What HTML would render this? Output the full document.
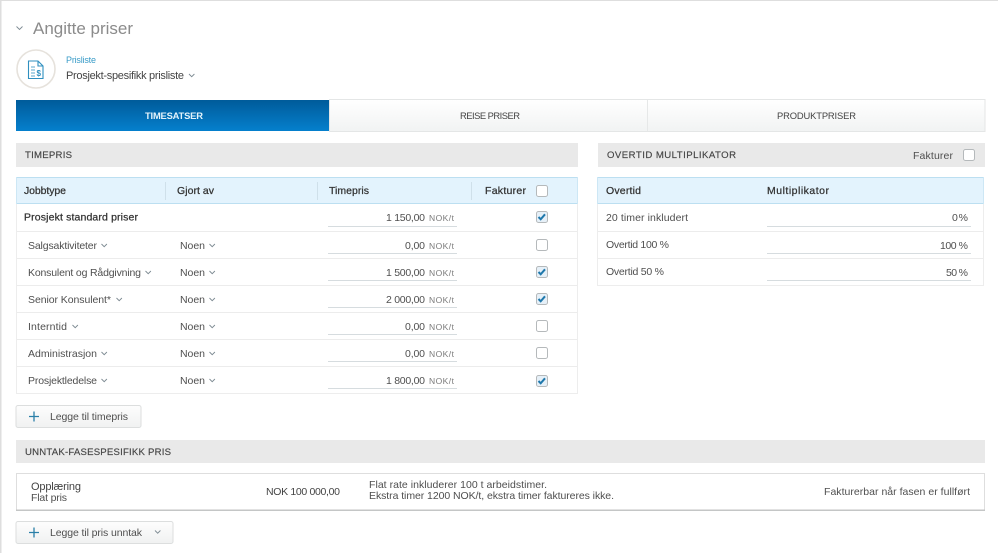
<!DOCTYPE html>
<html lang="no"><head><meta charset="utf-8"><title>Angitte priser</title>
<style>
html,body{margin:0;padding:0;background:#fff;overflow:hidden}
svg{display:block;filter:blur(.3px)}
text{font-family:"Liberation Sans",Arial,sans-serif;font-size:10.5px;fill:#4f4f4f}
.b{stroke:#333;stroke-width:.25;fill:#333}
.h{font-size:9.6px;fill:#444;stroke:#444;stroke-width:.15}
.c{fill:none;stroke:#7d8a92;stroke-width:.9}
.n{font-size:8.5px;fill:#7a7a7a}
.u{stroke:#d6dcdf;stroke-width:1}
.r{stroke:#ececec;stroke-width:1}
.cb{fill:#fff;stroke:#b5b9bb;stroke-width:1}
.cc{fill:#e6f0f8;stroke:#b5b9bb;stroke-width:1}
.ck{fill:none;stroke:#1f78ac;stroke-width:2}
.d{stroke:#cfe0ea;stroke-width:1}
</style></head><body>
<svg width="998" height="553" viewBox="0 0 998 553" xmlns="http://www.w3.org/2000/svg">
<defs>
<linearGradient id="blue" x1="0" y1="0" x2="0" y2="1"><stop offset="0" stop-color="#005b9a"/><stop offset="1" stop-color="#0580cd"/></linearGradient>
<linearGradient id="tab" x1="0" y1="0" x2="0" y2="1"><stop offset="0" stop-color="#fff"/><stop offset="1" stop-color="#f1f3f3"/></linearGradient>
<linearGradient id="btn" x1="0" y1="0" x2="0" y2="1"><stop offset="0" stop-color="#fdfdfd"/><stop offset="1" stop-color="#f0f1f1"/></linearGradient>
</defs>
<rect width="998" height="553" fill="#fff"/>
<rect x="0" y="0" width="998" height="1" fill="#dedede"/>
<rect x="0" y="0" width="1.5" height="553" fill="#dedede"/>

<path d="M16.5 26.500l3 3 3-3" class="c"/>
<text x="33" y="34" style="font-size:17px;fill:#8b8b8b" textLength="100">Angitte priser</text>

<circle cx="36" cy="69" r="19" fill="#fff" stroke="#e6e2dc" stroke-width="1.6"/>
<path d="M28.500 61h9.500l5 5v12.500h-14.500zM38 61v5h5" fill="none" stroke="#2f8fbf" stroke-width="1.100"/>
<path d="M31 67h4M31 70h4M31 73h4M31 76h4" stroke="#5aa7cc" stroke-width="1"/>
<text x="36.500" y="76" style="font-size:8px;fill:#2f8fbf;font-weight:bold">$</text>
<text x="66" y="63" style="font-size:9px;fill:#3a9cc8" textLength="30">Prisliste</text>
<text x="66" y="79" style="font-size:11px;fill:#444" textLength="118">Prosjekt-spesifikk prisliste</text>
<path d="M189 74l2.700 2.700 2.700-2.700" class="c"/>

<rect x="329.500" y="99.500" width="655.500" height="32" fill="url(#tab)" stroke="#e4e6e6"/>
<line x1="647.500" y1="100" x2="647.500" y2="131" stroke="#e6e8e8"/>
<rect x="16" y="100" width="313" height="31" fill="url(#blue)"/>
<text x="145" y="119" style="font-size:9.400px;font-weight:bold;fill:#e4f3fb" textLength="58">TIMESATSER</text>
<text x="460" y="119" style="font-size:9.400px;fill:#444" textLength="60">REISE PRISER</text>
<text x="777" y="119" style="font-size:9.400px;fill:#444" textLength="79">PRODUKTPRISER</text>

<rect x="16" y="143" width="562" height="24" fill="#e9e9e9"/>
<text x="25" y="158" class="h" textLength="47">TIMEPRIS</text>
<rect x="598" y="143" width="387" height="24" fill="#e9e9e9"/>
<text x="607" y="158" class="h" textLength="129">OVERTID MULTIPLIKATOR</text>
<text x="913" y="159" textLength="40">Fakturer</text>
<rect x="963.500" y="149.500" width="11" height="11" rx="2" class="cb"/>

<!-- left table -->
<rect x="16.500" y="177.500" width="561" height="216" fill="#fff" stroke="#ededed"/>
<rect x="16" y="177" width="562" height="27" fill="#e3f3fd"/>
<path d="M16 177.500h562M16 203.500h562" stroke="#bcdff1"/>
<path d="M16.500 177v27M577.500 177v27" stroke="#cde7f5"/>
<path d="M165.500 182v18M317.500 182v18M471.500 182v18" class="d"/>
<text x="24" y="194" class="b" textLength="42">Jobbtype</text>
<text x="177" y="194" class="b" textLength="37">Gjort av</text>
<text x="329" y="194" class="b" textLength="40">Timepris</text>
<text x="485" y="194" class="b" textLength="41">Fakturer</text>
<rect x="536.500" y="185.500" width="11" height="11" rx="2" class="cb"/>

<path d="M17 231.500h560M17 258.500h560M17 285.500h560M17 312.500h560M17 339.500h560M17 366.500h560" class="r"/>

<text x="24" y="220.500" class="b" textLength="114">Prosjekt standard priser</text>
<line x1="328" y1="226.500" x2="457" y2="226.500" class="u"/>
<text x="386" y="221" textLength="39">1 150,00</text><text x="429" y="221" class="n" textLength="25">NOK/t</text>
<rect x="536.500" y="211.500" width="11" height="11" rx="2" class="cc"/><path d="M538.500 217l2.200 2.300 4.300-5" class="ck"/>

<text x="28" y="249" textLength="69">Salgsaktiviteter</text><path d="M101.500 244l2.700 2.700 2.700-2.700" class="c"/>
<text x="180" y="249" textLength="25">Noen</text><path d="M209.500 244l2.700 2.700 2.700-2.700" class="c"/>
<line x1="328" y1="253.500" x2="457" y2="253.500" class="u"/>
<text x="405" y="249" textLength="20">0,00</text><text x="429" y="249" class="n" textLength="25">NOK/t</text>
<rect x="536.500" y="239.500" width="11" height="11" rx="2" class="cb"/>

<text x="28" y="276" textLength="113">Konsulent og Rådgivning</text><path d="M145.500 271l2.700 2.700 2.700-2.700" class="c"/>
<text x="180" y="276" textLength="25">Noen</text><path d="M209.500 271l2.700 2.700 2.700-2.700" class="c"/>
<line x1="328" y1="280.500" x2="457" y2="280.500" class="u"/>
<text x="386" y="276" textLength="39">1 500,00</text><text x="429" y="276" class="n" textLength="25">NOK/t</text>
<rect x="536.500" y="266.500" width="11" height="11" rx="2" class="cc"/><path d="M538.500 272l2.200 2.300 4.300-5" class="ck"/>

<text x="28" y="303" textLength="83">Senior Konsulent*</text><path d="M116.500 298l2.700 2.700 2.700-2.700" class="c"/>
<text x="180" y="303" textLength="25">Noen</text><path d="M209.500 298l2.700 2.700 2.700-2.700" class="c"/>
<line x1="328" y1="307.500" x2="457" y2="307.500" class="u"/>
<text x="386" y="303" textLength="39">2 000,00</text><text x="429" y="303" class="n" textLength="25">NOK/t</text>
<rect x="536.500" y="293.500" width="11" height="11" rx="2" class="cc"/><path d="M538.500 299l2.200 2.300 4.300-5" class="ck"/>

<text x="28" y="330" textLength="39">Interntid</text><path d="M72.500 325l2.700 2.700 2.700-2.700" class="c"/>
<text x="180" y="330" textLength="25">Noen</text><path d="M209.500 325l2.700 2.700 2.700-2.700" class="c"/>
<line x1="328" y1="334.500" x2="457" y2="334.500" class="u"/>
<text x="405" y="330" textLength="20">0,00</text><text x="429" y="330" class="n" textLength="25">NOK/t</text>
<rect x="536.500" y="320.500" width="11" height="11" rx="2" class="cb"/>

<text x="28" y="357" textLength="69">Administrasjon</text><path d="M101.500 352l2.700 2.700 2.700-2.700" class="c"/>
<text x="180" y="357" textLength="25">Noen</text><path d="M209.500 352l2.700 2.700 2.700-2.700" class="c"/>
<line x1="328" y1="361.500" x2="457" y2="361.500" class="u"/>
<text x="405" y="357" textLength="20">0,00</text><text x="429" y="357" class="n" textLength="25">NOK/t</text>
<rect x="536.500" y="347.500" width="11" height="11" rx="2" class="cb"/>

<text x="28" y="384" textLength="69">Prosjektledelse</text><path d="M101.500 379l2.700 2.700 2.700-2.700" class="c"/>
<text x="180" y="384" textLength="25">Noen</text><path d="M209.500 379l2.700 2.700 2.700-2.700" class="c"/>
<line x1="328" y1="388.500" x2="457" y2="388.500" class="u"/>
<text x="386" y="384" textLength="39">1 800,00</text><text x="429" y="384" class="n" textLength="25">NOK/t</text>
<rect x="536.500" y="375.500" width="11" height="11" rx="2" class="cc"/><path d="M538.500 381l2.200 2.300 4.300-5" class="ck"/>

<!-- right table -->
<rect x="597.500" y="177.500" width="386" height="108" fill="#fff" stroke="#ededed"/>
<rect x="597" y="177" width="387" height="27" fill="#e3f3fd"/>
<path d="M597 177.500h387M597 203.500h387" stroke="#bcdff1"/>
<path d="M597.500 177v27M983.500 177v27" stroke="#cde7f5"/>
<text x="606" y="194" class="b" textLength="35">Overtid</text>
<text x="767" y="194" class="b" textLength="62">Multiplikator</text>
<path d="M598 231.500h385M598 258.500h385" class="r"/>
<text x="606" y="221" textLength="82">20 timer inkludert</text>
<line x1="767" y1="226.500" x2="971" y2="226.500" class="u"/>
<text x="952" y="221" textLength="16">0 %</text>
<text x="606" y="248" textLength="63">Overtid 100 %</text>
<line x1="767" y1="253.500" x2="971" y2="253.500" class="u"/>
<text x="940" y="249" textLength="28">100 %</text>
<text x="606" y="275" textLength="58">Overtid 50 %</text>
<line x1="767" y1="280.500" x2="971" y2="280.500" class="u"/>
<text x="946" y="276" textLength="22">50 %</text>

<!-- button 1 -->
<rect x="16" y="405.500" width="125" height="22" rx="2" fill="url(#btn)" stroke="#dcdede"/>
<path d="M29 416.500h10M34 411.500v10" stroke="#2a7fa8" stroke-width="1.300"/>
<text x="50" y="420" textLength="78">Legge til timepris</text>

<rect x="16" y="440" width="969" height="23" fill="#e9e9e9"/>
<text x="25" y="455" class="h" textLength="146">UNNTAK-FASESPESIFIKK PRIS</text>

<!-- card -->
<rect x="16.500" y="473.500" width="968" height="36.500" fill="#fff" stroke="#dedede"/>
<rect x="16" y="509.500" width="969" height="1.500" fill="#c4c6c6"/>
<text x="31" y="490" style="font-size:11px;fill:#444" textLength="50">Opplæring</text>
<text x="31" y="501" textLength="36">Flat pris</text>
<text x="266" y="495" style="fill:#444" textLength="74">NOK 100 000,00</text>
<text x="369" y="488" textLength="178">Flat rate inkluderer 100 t arbeidstimer.</text>
<text x="369" y="499" textLength="245">Ekstra timer 1200 NOK/t, ekstra timer faktureres ikke.</text>
<text x="824" y="495" textLength="146">Fakturerbar når fasen er fullført</text>

<!-- button 2 -->
<rect x="16" y="521.500" width="157" height="22" rx="2" fill="url(#btn)" stroke="#dcdede"/>
<path d="M29 532.500h10M34 527.500v10" stroke="#2a7fa8" stroke-width="1.300"/>
<text x="50" y="536" textLength="92">Legge til pris unntak</text>
<path d="M155 530.500l2.700 2.700 2.700-2.700" class="c"/>
</svg>
</body></html>
